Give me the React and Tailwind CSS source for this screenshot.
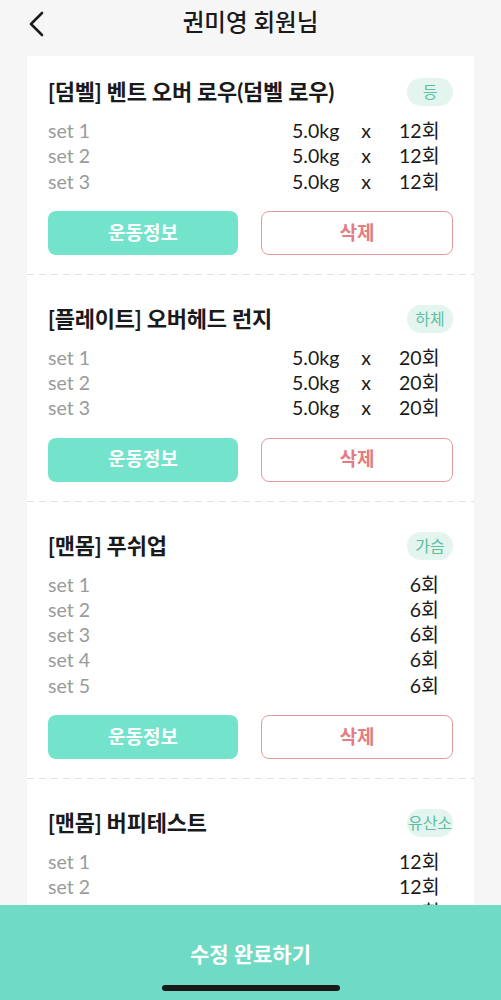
import React from 'react';

const workouts = [
    { name: '[덤벨] 벤트 오버 로우(덤벨 로우)', part: '등', sets: [['5.0kg', 12], ['5.0kg', 12], ['5.0kg', 12]] },
    { name: '[플레이트] 오버헤드 런지', part: '하체', sets: [['5.0kg', 20], ['5.0kg', 20], ['5.0kg', 20]] },
    { name: '[맨몸] 푸쉬업', part: '가슴', sets: [[null, 6], [null, 6], [null, 6], [null, 6], [null, 6]] },
    { name: '[맨몸] 버피테스트', part: '유산소', sets: [[null, 12], [null, 12], [null, 12]] },
];

const font = { fontFamily: 'Lato, "Noto Sans CJK KR", sans-serif' };

const Workout = ({ item, first }) => (
    <div className={`px-[21px] pb-[19px] ${first ? 'pt-[22px]' : 'pt-[30px]'}`}>
        <div className="flex items-center justify-between h-[28px]">
            <h2 className="text-[22px] leading-[28px] font-bold text-[#1a1a1a] tracking-[-0.2px]">{item.name}</h2>
            <span className="w-[46px] h-[28px] rounded-full bg-[#e4f5f0] text-[#5cbfa2] text-[16px] flex items-center justify-center whitespace-nowrap">
                {item.part}
            </span>
        </div>
        <div className="mt-[12px] pr-[14px]">
            {item.sets.map(([kg, reps], i) => (
                <div key={i} className="flex items-center justify-between leading-[25.25px] text-[19.5px]">
                    <span className="text-[#9a9a9a]">set {i + 1}</span>
                    <div className="flex items-center text-[#1a1a1a]">
                        {kg && <span>{kg}</span>}
                        {kg && <span className="ml-[22px] mr-[28px]">x</span>}
                        <span className="w-[40px] text-right whitespace-nowrap">{reps}회</span>
                    </div>
                </div>
            ))}
        </div>
        <div className="mt-[17px] flex gap-[23px]">
            <button type="button" className="flex-1 h-[44px] rounded-[8px] bg-[#73e4cb] text-white text-[19px] font-bold">
                운동정보
            </button>
            <button type="button" className="flex-1 h-[44px] rounded-[8px] border border-[#e39a9c] bg-white text-[#e27d82] text-[19px] font-bold">
                삭제
            </button>
        </div>
    </div>
);

export default () => (
    <div className="min-h-screen bg-[#f6f6f6]" style={font}>
        <header className="relative h-[56px] flex items-center justify-center">
            <svg className="absolute left-[27px] top-[11px]" width="20" height="26" viewBox="0 0 20 26" fill="none">
                <polyline points="15,2 4,13 15,24" stroke="#1a1a1a" strokeWidth="2.6" strokeLinecap="round" strokeLinejoin="round" />
            </svg>
            <h1 className="text-[23.5px] font-medium text-[#1a1a1a] -mt-[11px]">권미영 회원님</h1>
        </header>
        <main className="mx-[27px] bg-white pb-[120px]">
            {workouts.map((item, i) => (
                <div key={i}>
                    {i > 0 && <div className="h-px bg-[repeating-linear-gradient(90deg,#e2e2e2_0_7px,transparent_7px_12px)]" />}
                    <Workout item={item} first={i === 0} />
                </div>
            ))}
        </main>
        <div className="fixed bottom-0 left-0 right-0 h-[95px] bg-[#6fdbc4] flex flex-col items-center">
            <span className="mt-[33px] text-white text-[21px] font-bold">수정 완료하기</span>
            <div className="absolute bottom-[9px] w-[178px] h-[6px] rounded-full bg-[#1a1a1a]" />
        </div>
    </div>
);
